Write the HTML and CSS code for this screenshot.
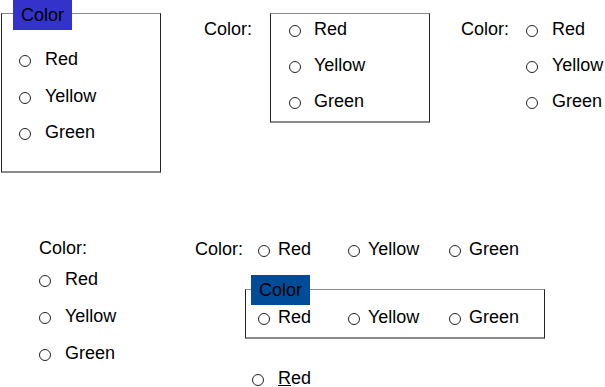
FILE: index.html
```html
<html>
	<head>
		<title>Radio groups</title>
		<link rel="stylesheet" href="styles.css">
	</head>
	<body>
		<div class="top">
			<div class="box box-titled">
				<div class="legend legend-blue">Color</div>
				<div class="options">
					<label class="opt"><span class="dot"></span>Red</label>
					<label class="opt"><span class="dot"></span>Yellow</label>
					<label class="opt"><span class="dot"></span>Green</label>
				</div>
			</div>

			<div class="group group-framed">
				<div class="caption">Color:</div>
				<div class="box box-plain">
					<div class="options">
						<label class="opt"><span class="dot"></span>Red</label>
						<label class="opt"><span class="dot"></span>Yellow</label>
						<label class="opt"><span class="dot"></span>Green</label>
					</div>
				</div>
			</div>

			<div class="group group-bare">
				<div class="caption">Color:</div>
				<div class="options">
					<label class="opt"><span class="dot"></span>Red</label>
					<label class="opt"><span class="dot"></span>Yellow</label>
					<label class="opt"><span class="dot"></span>Green</label>
				</div>
			</div>
		</div>

		<div class="bottom">
			<div class="stacked">
				<div class="caption">Color:</div>
				<div class="options">
					<label class="opt"><span class="dot"></span>Red</label>
					<label class="opt"><span class="dot"></span>Yellow</label>
					<label class="opt"><span class="dot"></span>Green</label>
				</div>
			</div>

			<div class="inline-col">
				<div class="inline-row inline-first">
					<div class="caption">Color:</div>
					<label class="opt opt-red"><span class="dot"></span>Red</label>
					<label class="opt opt-yellow"><span class="dot"></span>Yellow</label>
					<label class="opt"><span class="dot"></span>Green</label>
				</div>

				<div class="box box-wide">
					<div class="legend legend-navy">Color</div>
					<div class="inline-row">
						<label class="opt opt-red"><span class="dot"></span>Red</label>
						<label class="opt opt-yellow"><span class="dot"></span>Yellow</label>
						<label class="opt"><span class="dot"></span>Green</label>
					</div>
				</div>

				<div class="single">
					<label class="opt"><span class="dot"></span><u>R</u>ed</label>
				</div>
			</div>
		</div>
	</body>
</html>
```

FILE: styles.css
```css
body
{
	margin: 0;
	width: 605px;
	height: 387px;
	overflow: hidden;
	background-color: #ffffff;
	color: #000000;
	font-family: "Liberation Sans", Arial, sans-serif;
	font-size: 18px;
}

.top
{
	display: flex;
	align-items: flex-start;
	height: 173px;
}

.bottom
{
	display: flex;
	align-items: flex-start;
	margin-top: 61px;
}

.box
{
	position: relative;
	box-sizing: border-box;
	border: 1px solid;
	border-color: #8a8a8a #222222 #8a8a8a #222222;
	border-bottom-width: 2px;
}

.legend
{
	position: absolute;
	height: 30px;
	line-height: 31px;
	padding: 0 8px;
	color: #000000;
}

.legend-blue
{
	top: -14px;
	left: 11px;
	background-color: #3333cc;
}

.legend-navy
{
	top: -15px;
	left: 5px;
	background-color: #004c99;
}

.options
{
	display: flex;
	flex-direction: column;
	gap: 8px;
}

.opt
{
	display: block;
	height: 28px;
	line-height: 28px;
	white-space: nowrap;
}

.dot
{
	display: inline-block;
	box-sizing: border-box;
	width: 12px;
	height: 12px;
	margin-right: 14px;
	border: 1px solid #222222;
	border-radius: 50%;
	vertical-align: -2px;
}

.caption
{
	height: 28px;
	line-height: 28px;
	white-space: nowrap;
}

/* group with legend title */
.box-titled
{
	width: 160px;
	height: 160px;
	margin: 13px 0 0 1px;
	padding: 31px 0 0 17px;
}

.box-titled .options
{
	gap: 8.5px;
}

/* label left of bordered box */
.group
{
	display: flex;
	align-items: flex-start;
}

.group-framed
{
	margin-left: 43px;
}

.group-framed .caption
{
	width: 66px;
	margin-top: 15px;
}

.box-plain
{
	width: 160px;
	height: 110px;
	margin-top: 13px;
	padding: 1px 0 0 18px;
}

.group-framed .dot
{
	margin-right: 13px;
}

.group-bare
{
	margin-left: 31px;
	margin-top: 15px;
}

.group-bare .caption
{
	width: 65px;
}

/* label above the list */
.stacked
{
	margin-left: 39px;
	width: 156px;
}

.stacked .options
{
	margin-top: 3px;
	gap: 9px;
}

/* horizontal groups */
.inline-col
{
	display: flex;
	flex-direction: column;
}

.inline-row
{
	display: flex;
	align-items: flex-start;
}

.inline-first
{
	margin-top: 1px;
}

.inline-row .caption
{
	width: 63px;
}

.inline-row .dot
{
	margin-right: 8px;
}

.opt-red
{
	width: 90px;
}

.opt-yellow
{
	width: 101px;
}

.box-wide
{
	width: 300px;
	height: 50px;
	margin: 26px 0 0 50px;
	padding: 13px 0 0 12px;
}

.single
{
	margin: 25px 0 0 57px;
}
```
